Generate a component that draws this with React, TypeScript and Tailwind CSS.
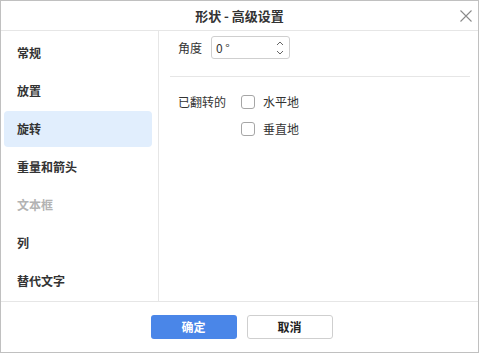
import { useState } from 'react';

const FONT = { fontFamily: '"Microsoft YaHei", "Noto Sans CJK SC", "Noto Sans", sans-serif' };

const NAV = [
  { label: '常规' },
  { label: '放置' },
  { label: '旋转', active: true },
  { label: '重量和箭头' },
  { label: '文本框', disabled: true },
  { label: '列' },
  { label: '替代文字' },
];

function Checkbox({ label }: { label: string }) {
  const [checked, setChecked] = useState(false);
  return (
    <label className="flex h-[14px] cursor-pointer items-center gap-[8px]">
      <span
        onClick={() => setChecked(!checked)}
        className="box-border h-[14px] w-[14px] rounded-[3px] border border-[#a6a6a6] bg-white"
      />
      <span className="text-[12px] text-[#333]">{label}</span>
    </label>
  );
}

export default function App() {
  return (
    <div
      className="box-border flex h-[353px] w-[479px] flex-col border border-[#c0c0c0] bg-white text-[#333]"
      style={FONT}
    >
      {/* header */}
      <div className="relative flex h-[30px] shrink-0 items-center justify-center border-b border-[#e6e6e6]">
        <span className="text-[13px] font-bold text-[#333]">形状 - 高级设置</span>
        <svg
          className="absolute right-[5px] top-[8px]"
          width="14"
          height="14"
          viewBox="0 0 14 14"
          fill="none"
          stroke="#8a8a8a"
          strokeWidth="1.1"
        >
          <path d="M1.5 1.5 L12.5 12.5 M12.5 1.5 L1.5 12.5" />
        </svg>
      </div>

      {/* body */}
      <div className="flex min-h-0 flex-1">
        <div className="flex w-[158px] shrink-0 flex-col gap-[2px] border-r border-[#e6e6e6] pt-[4px]">
          {NAV.map((item) => (
            <div
              key={item.label}
              className={
                'ml-[3px] flex h-[36px] w-[148px] items-center rounded-[4px] pl-[13px] text-[12px] font-bold ' +
                (item.active ? 'bg-[#e1eefd] ' : '') +
                (item.disabled ? 'text-[#b3b3b3]' : 'text-[#333]')
              }
            >
              {item.label}
            </div>
          ))}
        </div>

        <div className="flex flex-1 flex-col pt-[5px]">
          <div className="flex items-center pl-[19px]">
            <span className="w-[33px] text-[12px]">角度</span>
            <div className="relative box-border flex h-[23px] w-[79px] items-center rounded-[3px] border border-[#cfcfcf] pl-[4px]">
              <span className="text-[12px] text-[#333]">0 °</span>
              <svg
                className="absolute right-[5px] top-[3px]"
                width="8"
                height="16"
                viewBox="0 0 8 16"
                fill="none"
                stroke="#666"
                strokeWidth="1"
              >
                <path d="M1 5 L4 2 L7 5" />
                <path d="M1 11 L4 14 L7 11" />
              </svg>
            </div>
          </div>

          <div className="ml-[11px] mr-[8px] mt-[17px] h-px bg-[#e6e6e6]" />

          <div className="flex pl-[19px] pt-[18px]">
            <span className="w-[63px] text-[12px] leading-[14px]">已翻转的</span>
            <div className="flex flex-col gap-[13px]">
              <Checkbox label="水平地" />
              <Checkbox label="垂直地" />
            </div>
          </div>
        </div>
      </div>

      {/* footer */}
      <div className="flex h-[51px] shrink-0 items-center justify-center gap-[10px] border-t border-[#e6e6e6] pl-[4px]">
        <button className="h-[24px] w-[86px] rounded-[3px] bg-[#4a86e8] text-[12px] font-bold text-white">
          确定
        </button>
        <button className="box-border h-[24px] w-[86px] rounded-[3px] border border-[#cfcfcf] bg-white text-[12px] font-bold text-[#222]">
          取消
        </button>
      </div>
    </div>
  );
}
